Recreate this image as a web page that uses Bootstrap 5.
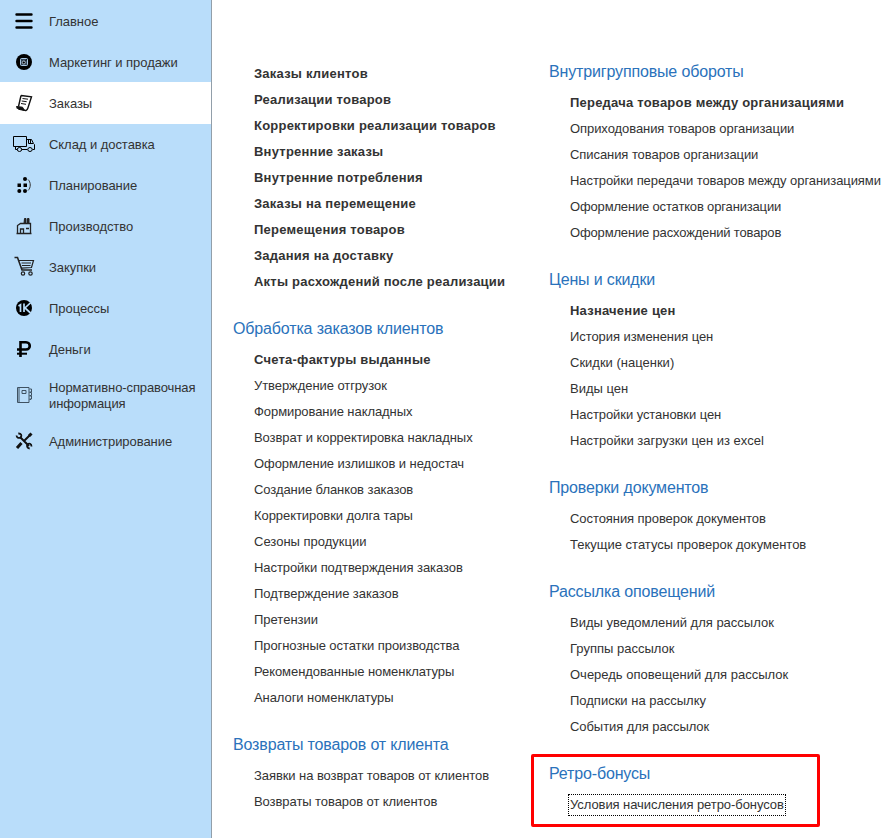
<!DOCTYPE html>
<html lang="ru">
<head>
<meta charset="utf-8">
<meta name="viewport" content="width=device-width, initial-scale=1">
<title>Заказы</title>
<link href="https://cdn.jsdelivr.net/npm/bootstrap@5.3.0/dist/css/bootstrap.min.css" rel="stylesheet">
<style>
body{font-family:"Liberation Sans",Arial,sans-serif;font-size:13px;line-height:16px;color:#333;background:#fff;letter-spacing:-.07px;height:838px;overflow:hidden}
.side-panel{width:212px;height:838px;background:#b9ddfa;border-right:1px solid #929faa;letter-spacing:-.05px}
.side-panel .nav-link{height:41px;padding:2px 0 0 0;color:#333}
.side-panel .nav-link.tall{height:51px;padding-top:2px;letter-spacing:-.1px}
.side-panel .nav-link.active{background:#fff;height:42px;margin-bottom:-1px;padding-bottom:1px}
.side-panel svg{width:24px;height:24px;margin:-1px 13px 0 12px;flex:none}
.left-col{width:316px;padding:61px 0 0 21px}
.right-col{width:346px;padding:59px 0 0 21px}
.group-title{font-size:16px;line-height:26px;color:#2a72bb;margin:0 0 5px;font-weight:400;letter-spacing:-.15px}
.section{margin-bottom:21px;position:relative}
.section li{height:26px;line-height:26px;padding-left:21px;white-space:nowrap}
.section a{color:inherit;text-decoration:none}
.section .fw-bold{letter-spacing:.22px}
.section .loose{letter-spacing:0}
.section .tight{letter-spacing:-.16px}
.focused{outline:1px dotted #000;display:inline-block;line-height:18px;outline-offset:1px}
.red-frame{position:absolute;left:-18px;top:-7px;width:289px;height:73px;border:3px solid #f00;border-radius:2px}
</style>
</head>
<body>
<div class="d-flex">
<nav class="side-panel nav flex-column flex-nowrap flex-shrink-0">
<a class="nav-link d-flex align-items-center" href="#"><svg viewBox="0 0 24 24"><path d="M4.500 5.500h15M4.500 12h15M4.500 18.500h15" stroke="#000" stroke-width="2.400" stroke-linecap="round"/></svg><span>Главное</span></a>
<a class="nav-link d-flex align-items-center" href="#"><svg viewBox="0 0 24 24"><circle cx="12" cy="12" r="8"/><rect x="8.500" y="8.500" width="7" height="7" rx="1" fill="#345" stroke="#b9ddfa" stroke-width=".9"/><circle cx="11.800" cy="12.500" r="1.500" stroke="#cde" stroke-width=".8" fill="#000"/><path d="M13.500 10.500l1.500-1" stroke="#000"/></svg><span>Маркетинг и продажи</span></a>
<a class="nav-link active d-flex align-items-center" href="#"><svg viewBox="0 0 24 24" fill="none" stroke="#111"><path d="M9 4.500l10.500 1.300-3.700 11.500c-.7 2.200-2.300 2.700-3.500 1.700L4.500 16.500M9 4.500l-2.500 11" stroke-width="1.400"/><path d="M4.500 15.500l6 .7 2 3.300-6-1.200z" fill="#111"/><path d="M10.500 7.500l5.500.7M9.700 10l5 .7M9 12.500l5 .8"/></svg><span>Заказы</span></a>
<a class="nav-link d-flex align-items-center" href="#"><svg viewBox="0 0 24 24" fill="none" stroke="#000"><path d="M1.500 4.500h13v10h-13zM3.500 14.500v3h2M9.500 17.500h6M14.500 7.500h5l2 4 1 1v5h-2M16.500 8v3.500h4.500M18.500 8v3.500"/><ellipse cx="7.500" cy="17.500" rx="2.200" ry="2"/><ellipse cx="18" cy="17.500" rx="2.200" ry="2"/></svg><span>Склад и доставка</span></a>
<a class="nav-link d-flex align-items-center" href="#"><svg viewBox="0 0 24 24"><circle cx="13" cy="6" r="2"/><path d="M5.500 10.500H9v3.500H5.500zM11.500 10.500H15v3.500h-3.500z"/><circle cx="7.300" cy="18" r="2"/><circle cx="13" cy="18" r="2"/><path d="M16 6.500c3 2.500 3 8.500 0 11" fill="none" stroke="#333"/></svg><span>Планирование</span></a>
<a class="nav-link d-flex align-items-center" href="#"><svg viewBox="0 0 24 24" fill="none" stroke="#222"><path d="M4.500 19.500h15M5.500 19v-7.500l3-2H18.500V19M8.500 19v-4h3v4M14 14.500h3" stroke-width="1.300"/><path d="M12.500 4.500h1.500v5h-2zM15.500 4.500h1.500v5h-1.500z" fill="#222"/></svg><span>Производство</span></a>
<a class="nav-link d-flex align-items-center" href="#"><svg viewBox="0 0 24 24" fill="none" stroke="#222" stroke-width="1.200"><path d="M2.500 2.500h3l4.500 12.500h10" stroke-width="1.600"/><path d="M6.800 5.500h14.700l-2 7-10 .7M9.500 8h9.500M10 10.500h8.500"/><circle cx="11" cy="18.500" r="1.700"/><circle cx="18.500" cy="18.500" r="1.700"/></svg><span>Закупки</span></a>
<a class="nav-link d-flex align-items-center" href="#"><svg viewBox="0 0 24 24" fill="none" stroke="#b9ddfa" stroke-width="1.700"><circle cx="12" cy="12" r="8" fill="#000" stroke="none"/><path d="M6.500 10l2-1.200V16M12 7.500V16M18.800 6.500L13 12l5.500 5"/></svg><span>Процессы</span></a>
<a class="nav-link d-flex align-items-center" href="#"><svg viewBox="0 0 24 24" fill="none" stroke="#000" stroke-width="2.600"><path d="M8.500 20V5.300H14c5 0 5 7.200 0 7.200H5"/><path d="M5 16.700h10" stroke-width="2"/></svg><span>Деньги</span></a>
<a class="nav-link tall d-flex align-items-center" href="#"><svg viewBox="0 0 24 24" fill="none" stroke="#3f5262"><path d="M5.500 4.500h11.500v15H5.500zM7 5v14"/><path d="M10 7.500h4v3h-4z"/><path d="M17.500 6h2v3h-2M17.500 9.500h2v3h-2M17.500 13h2v3h-2M17.500 16.500h1.500"/></svg><span>Нормативно-справочная<br>информация</span></a>
<a class="nav-link d-flex align-items-center" href="#"><svg viewBox="0 0 24 24" fill="none" stroke="#111"><path d="M8 8l9 9M17.500 6.500L12 12" stroke-width="2"/><path d="M19.500 4.500L17 7M9.500 14l-4.500 5" stroke-width="3"/><path d="M6.300 4.500c3-.2 3.700 2 2.500 3.700-1.700 1.400-4 .8-4.300-1.700M19.500 17.500c0-3-2.500-3.500-3.800-2.200-1.500 1.700-.5 4 2 4.200" stroke-width="1.800"/></svg><span>Администрирование</span></a>
</nav>
<main class="d-flex">
<div class="left-col">
<section class="section"><ul class="list-unstyled mb-0 fw-bold">
<li><a href="#">Заказы клиентов</a></li><li><a href="#">Реализации товаров</a></li><li><a href="#">Корректировки реализации товаров</a></li><li><a href="#">Внутренние заказы</a></li><li><a href="#">Внутренние потребления</a></li><li><a href="#">Заказы на перемещение</a></li><li><a href="#">Перемещения товаров</a></li><li><a href="#">Задания на доставку</a></li><li><a href="#">Акты расхождений после реализации</a></li></ul></section>
<section class="section"><h2 class="group-title">Обработка заказов клиентов</h2><ul class="list-unstyled mb-0">
<li class="fw-bold"><a href="#">Счета-фактуры выданные</a></li><li><a href="#">Утверждение отгрузок</a></li><li><a href="#">Формирование накладных</a></li><li><a href="#">Возврат и корректировка накладных</a></li><li><a href="#">Оформление излишков и недостач</a></li><li><a href="#">Создание бланков заказов</a></li><li><a href="#">Корректировки долга тары</a></li><li class="loose"><a href="#">Сезоны продукции</a></li><li><a href="#">Настройки подтверждения заказов</a></li><li><a href="#">Подтверждение заказов</a></li><li class="loose"><a href="#">Претензии</a></li><li><a href="#">Прогнозные остатки производства</a></li><li><a href="#">Рекомендованные номенклатуры</a></li><li><a href="#">Аналоги номенклатуры</a></li></ul></section>
<section class="section"><h2 class="group-title">Возвраты товаров от клиента</h2><ul class="list-unstyled mb-0">
<li><a href="#">Заявки на возврат товаров от клиентов</a></li><li><a href="#">Возвраты товаров от клиентов</a></li></ul></section>
</div>
<div class="right-col">
<section class="section"><h2 class="group-title">Внутригрупповые обороты</h2><ul class="list-unstyled mb-0">
<li class="fw-bold"><a href="#">Передача товаров между организациями</a></li><li><a href="#">Оприходования товаров организации</a></li><li><a href="#">Списания товаров организации</a></li><li><a href="#">Настройки передачи товаров между организациями</a></li><li class="tight"><a href="#">Оформление остатков организации</a></li><li class="tight"><a href="#">Оформление расхождений товаров</a></li></ul></section>
<section class="section"><h2 class="group-title">Цены и скидки</h2><ul class="list-unstyled mb-0">
<li class="fw-bold"><a href="#">Назначение цен</a></li><li><a href="#">История изменения цен</a></li><li class="loose"><a href="#">Скидки (наценки)</a></li><li class="loose"><a href="#">Виды цен</a></li><li><a href="#">Настройки установки цен</a></li><li class="loose"><a href="#">Настройки загрузки цен из excel</a></li></ul></section>
<section class="section"><h2 class="group-title">Проверки документов</h2><ul class="list-unstyled mb-0">
<li><a href="#">Состояния проверок документов</a></li><li class="loose"><a href="#">Текущие статусы проверок документов</a></li></ul></section>
<section class="section"><h2 class="group-title">Рассылка оповещений</h2><ul class="list-unstyled mb-0">
<li class="loose"><a href="#">Виды уведомлений для рассылок</a></li><li class="loose"><a href="#">Группы рассылок</a></li><li class="loose"><a href="#">Очередь оповещений для рассылок</a></li><li class="loose"><a href="#">Подписки на рассылку</a></li><li><a href="#">События для рассылок</a></li></ul></section>
<section class="section"><h2 class="group-title">Ретро-бонусы</h2><ul class="list-unstyled mb-0">
<li><a class="focused" href="#">Условия начисления ретро-бонусов</a></li></ul><div class="red-frame"></div></section>
</div>
</main>
</div>
<script src="https://cdn.jsdelivr.net/npm/bootstrap@5.3.0/dist/js/bootstrap.bundle.min.js"></script>
</body>
</html>
